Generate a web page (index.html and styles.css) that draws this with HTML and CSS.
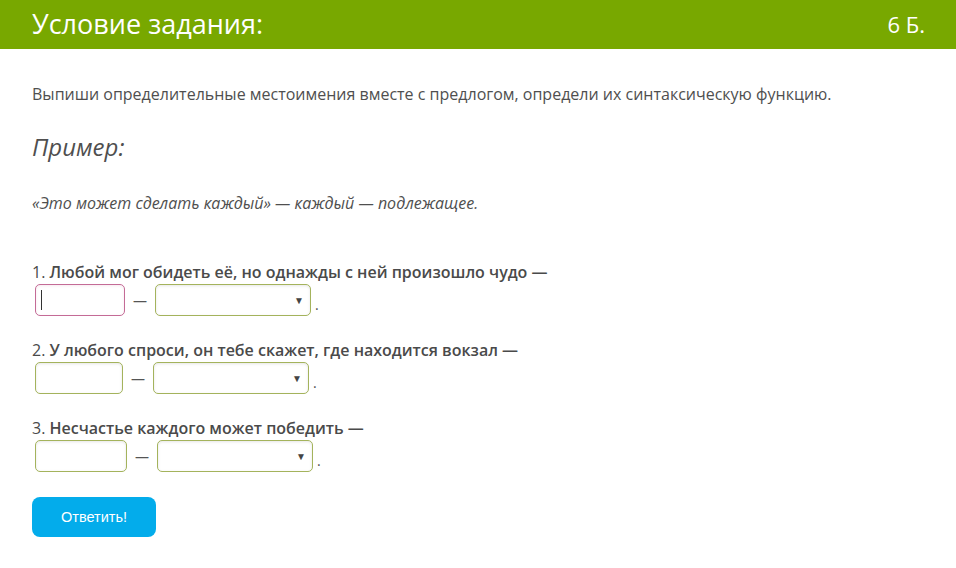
FILE: index.html
```html
<!DOCTYPE html>
<html lang="ru">
<head>
    <meta charset="UTF-8">
    <title>Условие задания</title>
    <link rel="stylesheet" href="styles.css">
</head>
<body>

    <!-- Header -->
    <header class="task-header">
        <h1>Условие задания:</h1>
        <span class="points">6 Б.</span>
    </header>

    <div class="task-body">
        <p class="instruction">Выпиши определительные местоимения вместе с предлогом, определи их синтаксическую функцию.</p>

        <h2 class="example-title">Пример:</h2>
        <p class="example">«Это может сделать каждый» — каждый — подлежащее.</p>

        <div class="question first">
            <p class="q-text">1. <b>Любой мог обидеть её, но однажды с ней произошло чудо —</b></p>
            <div class="answer-row">
                <span class="caret-wrap"><input type="text" class="word-input focused w90"></span>
                <span class="dash">—</span>
                <div class="select-box"><span class="arrow">▼</span></div>
                <span class="dot">.</span>
            </div>
        </div>

        <div class="question">
            <p class="q-text">2. <b>У любого спроси, он тебе скажет, где находится вокзал —</b></p>
            <div class="answer-row">
                <input type="text" class="word-input w88">
                <span class="dash">—</span>
                <div class="select-box"><span class="arrow">▼</span></div>
                <span class="dot">.</span>
            </div>
        </div>

        <div class="question">
            <p class="q-text">3. <b>Несчастье каждого может победить —</b></p>
            <div class="answer-row">
                <input type="text" class="word-input w92">
                <span class="dash">—</span>
                <div class="select-box"><span class="arrow">▼</span></div>
                <span class="dot">.</span>
            </div>
        </div>

        <button class="answer-btn">Ответить!</button>
    </div>

</body>
</html>
```

FILE: styles.css
```css
/* Global */
body {
    margin: 0;
    font-family: 'Open Sans', sans-serif;
    background-color: #fff;
    color: #4f4f4f;
}

/* Header */
.task-header {
    display: flex;
    justify-content: space-between;
    align-items: center;
    height: 49px;
    padding: 0 31px 0 32px;
    background-color: #78a800;
    color: #fff;
}

.task-header h1 {
    margin: -2px 0 0;
    font-size: 27px;
    font-weight: normal;
    line-height: 49px;
}

.points {
    font-size: 22px;
    margin-top: -2px;
}

/* Body */
.task-body {
    padding: 0 32px;
}

.instruction {
    margin: 32px 0 0;
    font-size: 16px;
    line-height: 26px;
}

.example-title {
    margin: 24px 0 0;
    font-size: 24px;
    font-style: italic;
    font-weight: normal;
    line-height: 32px;
}

.example {
    margin: 28px 0 0;
    font-size: 16px;
    font-style: italic;
    line-height: 24px;
}

.question {
    margin-top: 22px;
}

.question.first {
    margin-top: 45px;
}

.q-text {
    margin: 0;
    font-size: 16px;
    line-height: 24px;
    color: #4a4a4a;
}

.q-text b {
    font-weight: 600;
}

.answer-row {
    display: flex;
    align-items: center;
    height: 32px;
    padding-left: 3px;
}

.word-input {
    display: block;
    height: 32px;
    box-sizing: border-box;
    border: 1px solid #a4b35c;
    border-radius: 5px;
    box-shadow: inset 0 1px 3px rgba(0, 0, 0, 0.1);
    padding: 0 6px;
    font-family: inherit;
    font-size: 14px;
    outline: none;
}

.word-input.focused {
    border-color: #c46b96;
    box-shadow: inset 0 1px 3px rgba(196, 107, 150, 0.15);
}

/* text cursor in the focused field */
.caret-wrap {
    position: relative;
}

.caret-wrap::after {
    content: '';
    position: absolute;
    left: 6px;
    top: 6px;
    width: 1px;
    height: 20px;
    background-color: #333;
}

.w90 { width: 90px; }
.w88 { width: 88px; }
.w92 { width: 92px; }

.dash {
    margin: 0 8px;
    font-size: 14px;
    color: #555;
    padding-top: 1px;
}

.select-box {
    position: relative;
    width: 156px;
    height: 32px;
    box-sizing: border-box;
    border: 1px solid #a4b35c;
    border-radius: 5px;
    box-shadow: inset 0 1px 3px rgba(0, 0, 0, 0.1);
}

.arrow {
    position: absolute;
    right: 6px;
    top: 8px;
    font-size: 10px;
    color: #444;
}

.dot {
    margin-left: 4px;
    padding-top: 8px;
    font-size: 14px;
}

/* Button */
.answer-btn {
    display: block;
    margin-top: 25px;
    width: 124px;
    height: 40px;
    border: none;
    border-radius: 8px;
    background-color: #03aceb;
    color: #fff;
    font-family: 'Liberation Sans', Arial, sans-serif;
    font-size: 14.5px;
    cursor: pointer;
}
```
